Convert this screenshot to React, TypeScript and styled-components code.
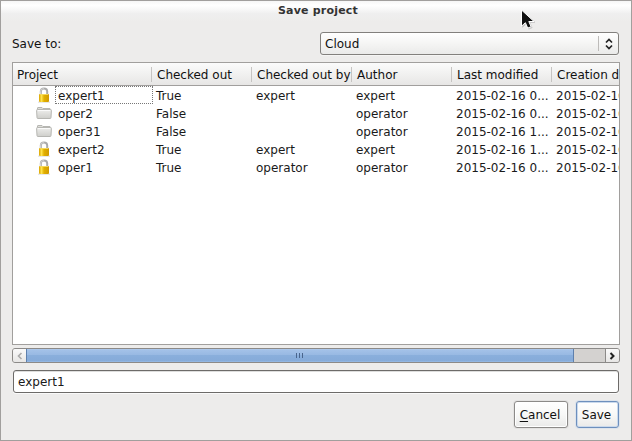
import React from "react";
import styled, { createGlobalStyle } from "styled-components";

const GlobalStyle = createGlobalStyle`
  * { box-sizing: border-box; }
  body { margin: 0; }
`;

const Window = styled.div`
  position: relative;
  display: flex;
  flex-direction: column;
  width: 632px;
  height: 441px;
  overflow: hidden;
  border: 1px solid #a19f9d;
  background: #edeceb;
  color: #1a1a1a;
  font: 12px/18px "DejaVu Sans", sans-serif;
  white-space: nowrap;
`;

const TitleBar = styled.header`
  height: 21px;
  flex: none;
  padding-left: 4px;
  background: linear-gradient(#f6f6f6, #ffffff 20%, #fafafa 35%, #efefef 60%, #edeceb);
  color: #333;
  font-size: 11px;
  font-weight: bold;
  letter-spacing: 0.2px;
  line-height: 19px;
  text-align: center;
`;

const Content = styled.main`
  display: flex;
  flex-direction: column;
  padding: 10px 11px 0;
`;

const SaveToRow = styled.div`
  display: flex;
  align-items: center;
  justify-content: space-between;
  height: 23px;
  color: #111;
`;

const Select = styled.div`
  display: flex;
  align-items: center;
  width: 299px;
  height: 23px;
  margin-right: 1px;
  padding-left: 4px;
  border: 1px solid #82807d;
  border-radius: 3px;
  background: linear-gradient(#ffffff, #f5f5f4 50%, #eaeae9);
  box-shadow: 0 1px 0 #f5f5f4;
`;

const SelectArrows = styled.span`
  display: flex;
  align-items: center;
  justify-content: center;
  width: 20px;
  height: 15px;
  margin-left: auto;
  border-left: 1px solid #bdbbb9;
`;

const Table = styled.section`
  height: 283px;
  margin-top: 7px;
  overflow: hidden;
  border: 1px solid #a19f9d;
  background: #fff;
`;

const Grid = styled.div`
  display: grid;
  grid-template-columns: 139px repeat(5, 100px);
`;

const HeaderRow = styled(Grid)`
  height: 23px;
  align-items: center;
  border-bottom: 1px solid #a19f9d;
  background: linear-gradient(#fbfbfb, #f1f1f0 50%, #e7e6e5);
  color: #111;
`;

const HeaderCell = styled.div<{ $first?: boolean }>`
  height: 15px;
  padding-left: ${(p) => (p.$first ? 4 : 5)}px;
  line-height: 17px;
  border-right: 1px solid #c6c4c2;
`;

const BodyRow = styled(Grid)`
  height: 18px;
`;

const Cell = styled.div`
  padding-left: 4px;
  line-height: 21px;
`;

const ProjectCell = styled.div`
  display: flex;
  padding-left: 23px;
`;

const ProjectName = styled.div<{ $focused: boolean }>`
  flex: 1;
  height: 18px;
  margin: 0 -1px 0 3px;
  padding-left: 2px;
  border: 1px dotted ${(p) => (p.$focused ? "#777" : "transparent")};
  line-height: 19px;
`;

const ScrollBar = styled.div`
  display: flex;
  height: 15px;
  margin-top: 3px;
  border: 1px solid #8c8a88;
  border-radius: 3px;
  overflow: hidden;
  background: #d4d2d0;
`;

const ScrollButton = styled.div`
  display: flex;
  align-items: center;
  justify-content: center;
  width: 13px;
  height: 13px;
  background: linear-gradient(#fafafa, #e7e6e5);
`;

const Thumb = styled.div`
  display: flex;
  align-items: center;
  justify-content: center;
  gap: 2px;
  width: 548px;
  height: 15px;
  margin-top: -1px;
  padding-right: 1px;
  border: 1px solid #5e80ad;
  background: linear-gradient(#b3cdef 0, #a3c1e8 1px, #98b9e3 6px, #8aafdc 6px, #86abd9 12px, #92b6e2 12px);
`;

const Grip = styled.i`
  width: 1px;
  height: 5px;
  background: #49658d;
`;

const Track = styled.div`
  flex: 1;
  border-right: 1px solid #8c8a88;
`;

const NameInput = styled.input`
  width: 606px;
  height: 23px;
  margin: 7px 0 0 1px;
  padding: 1px 0 0 4px;
  border: 1px solid #6d6b69;
  border-radius: 3px;
  outline: none;
  background: #fff;
  box-shadow: inset 0 1px 0 #dededd, 0 1px 0 #fafafa;
  color: #1a1a1a;
  font: inherit;
`;

const Actions = styled.footer`
  display: flex;
  justify-content: flex-end;
  gap: 8px;
  margin: 8px 1px 0 0;
`;

const Button = styled.button<{ $primary?: boolean }>`
  width: ${(p) => (p.$primary ? 43 : 54)}px;
  height: 27px;
  padding: 0 2px 0 0;
  border: 1px solid ${(p) => (p.$primary ? "#6d8fbd" : "#8c8a88")};
  border-radius: 3px;
  background: linear-gradient(#ffffff, #f8f8f7 50%, #eaeae9);
  box-shadow: ${(p) =>
    p.$primary ? "inset 0 0 0 1px #cad9ec, 0 0 0 1px #dde3eb" : "inset 0 0 0 1px #fff, 0 0 0 1px #e3e2e1"};
  color: #111;
  font: inherit;
`;

const Mnemonic = styled.span`
  text-decoration: underline;
  text-decoration-thickness: 1px;
  text-underline-offset: 2px;
`;

const Pointer = styled.svg`
  position: absolute;
  left: 519px;
  top: 8px;
`;

const Lock = () => (
  <svg width="16" height="18" viewBox="0 0 16 18">
    <defs>
      <linearGradient id="gold" x1="0" x2="1">
        <stop offset="0" stopColor="#d9a300" />
        <stop offset=".25" stopColor="#ffe34d" />
        <stop offset=".5" stopColor="#e2b000" />
        <stop offset="1" stopColor="#d09a00" />
      </linearGradient>
    </defs>
    <path d="M2 16.2h12" stroke="#c9c9c9" opacity=".6" />
    <path d="M4.8 9V5.5Q4.8 2.5 8 2.5T11.2 5.5V9" fill="none" stroke="#aaa" strokeWidth="2" />
    <path d="M4.5 8V5.6Q4.6 2.5 7.8 2.5" fill="none" stroke="#ddd" strokeWidth=".8" />
    <rect x="3" y="8" width="10" height="8" rx="1" fill="url(#gold)" />
    <path d="M4 8.5h8" stroke="#f5d85c" />
  </svg>
);

const Folder = () => (
  <svg width="16" height="18" viewBox="0 0 16 18">
    <defs>
      <linearGradient id="paper" x2="0" y2="1">
        <stop offset="0" stopColor="#eeeeec" />
        <stop offset="1" stopColor="#cfcfcb" />
      </linearGradient>
    </defs>
    <path d="M1.5 13V4Q1.5 3.5 2 3.5H6L7 4.5H14V13" fill="#deded9" stroke="#b6b6b2" />
    <path d="M.6 6.5Q.5 5.5 1.5 5.5h13q1 0 .9 1L15 13.6q0 .9-.9.9H1.9q-.9 0-.9-.9Z" fill="url(#paper)" stroke="#b6b6b2" />
    <path d="M2 6.5h12" stroke="#fafafa" />
  </svg>
);

const Chevron = ({ right = false }: { right?: boolean }) => (
  <svg width="7" height="8" viewBox="0 0 7 8">
    <path
      d={right ? "M1.5 1 4.5 4 1.5 7" : "M5.5 1 2.5 4 5.5 7"}
      fill="none"
      stroke={right ? "#222" : "#aaa"}
      strokeWidth={right ? 2 : 1.6}
    />
  </svg>
);

const headings = ["Project", "Checked out", "Checked out by", "Author", "Last modified", "Creation date"];

const projects = [
  { name: "expert1", holder: "expert", locked: true, author: "expert", modified: "2015-02-16 0..." },
  { name: "oper2", holder: "", locked: false, author: "operator", modified: "2015-02-16 0..." },
  { name: "oper31", holder: "", locked: false, author: "operator", modified: "2015-02-16 1..." },
  { name: "expert2", holder: "expert", locked: true, author: "expert", modified: "2015-02-16 1..." },
  { name: "oper1", holder: "operator", locked: true, author: "operator", modified: "2015-02-16 0..." },
];

export default function App() {
  return (
    <Window>
      <GlobalStyle />
      <TitleBar>Save project</TitleBar>
      <Content>
        <SaveToRow>
          <span>Save to:</span>
          <Select>
            Cloud
            <SelectArrows>
              <svg width="10" height="12" viewBox="0 0 10 12">
                <path d="M2 4.5 5 1.5 8 4.5M2 7.5 5 10.5 8 7.5" fill="none" stroke="#222" strokeWidth="1.7" />
              </svg>
            </SelectArrows>
          </Select>
        </SaveToRow>
        <Table>
          <HeaderRow>
            {headings.map((heading, i) => (
              <HeaderCell key={heading} $first={i === 0}>{heading}</HeaderCell>
            ))}
          </HeaderRow>
          {projects.map((project, i) => (
            <BodyRow key={project.name}>
              <ProjectCell>
                {project.locked ? <Lock /> : <Folder />}
                <ProjectName $focused={i === 0}>{project.name}</ProjectName>
              </ProjectCell>
              <Cell>{project.locked ? "True" : "False"}</Cell>
              <Cell>{project.holder}</Cell>
              <Cell>{project.author}</Cell>
              <Cell>{project.modified}</Cell>
              <Cell>2015-02-16 0...</Cell>
            </BodyRow>
          ))}
        </Table>
        <ScrollBar>
          <ScrollButton><Chevron /></ScrollButton>
          <Thumb><Grip /><Grip /><Grip /></Thumb>
          <Track />
          <ScrollButton><Chevron right /></ScrollButton>
        </ScrollBar>
        <NameInput defaultValue="expert1" />
        <Actions>
          <Button><Mnemonic>C</Mnemonic>ancel</Button>
          <Button $primary>Save</Button>
        </Actions>
      </Content>
      <Pointer width="18" height="24" viewBox="0 0 18 24">
        <path d="M2.5 2v16.2l3.9-3.5 2.3 5.4 3.4-1.4-2.3-5.2h5.2Z" fill="#888" stroke="#999" opacity=".4" />
        <path d="M1.5 1v16.2l3.9-3.5 2.3 5.4 3.4-1.4-2.3-5.2h5.2Z" fill="#111" stroke="#fff" />
      </Pointer>
    </Window>
  );
}
